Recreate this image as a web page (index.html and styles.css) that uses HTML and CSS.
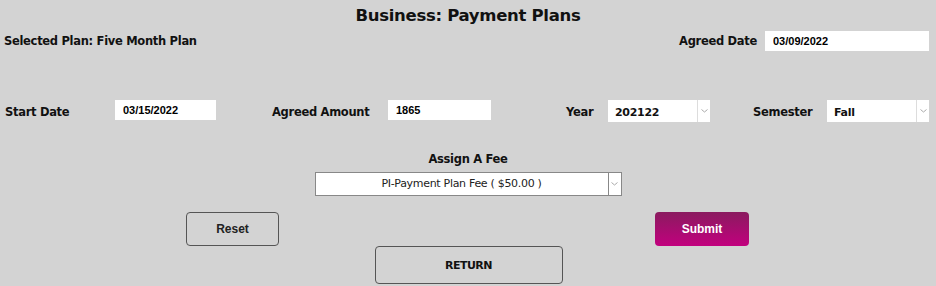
FILE: index.html
```html
<!DOCTYPE html>
<html lang="en">

<head>
  <meta charset="UTF-8">
  <meta name="viewport" content="width=device-width, initial-scale=1.0">
  <title>Business: Payment Plans</title>
  <link rel="stylesheet" href="styles.css">
</head>

<body>
  <div class="page">
    <h1 class="title">Business: Payment Plans</h1>

    <div class="row-top">
      <span class="label">Selected Plan: Five Month Plan</span>
      <div class="field">
        <span class="label">Agreed Date</span>
        <input class="box box-date" type="text" value="03/09/2022">
      </div>
    </div>

    <div class="row-fields">
      <span class="label lbl-start">Start Date</span>
      <input class="box box-small" type="text" value="03/15/2022">
      <span class="label lbl-amount">Agreed Amount</span>
      <input class="box box-small amount" type="text" value="1865">
      <span class="label lbl-year">Year</span>
      <div class="drop">
        <span class="drop-text">202122</span>
        <span class="drop-arrow"><svg width="7" height="4" viewBox="0 0 7 4"><path d="M0.5 0.5 L3.5 3 L6.5 0.5" fill="none" stroke="#aaa" stroke-width="1"/></svg></span>
      </div>
      <span class="label lbl-sem">Semester</span>
      <div class="drop">
        <span class="drop-text">Fall</span>
        <span class="drop-arrow"><svg width="7" height="4" viewBox="0 0 7 4"><path d="M0.5 0.5 L3.5 3 L6.5 0.5" fill="none" stroke="#aaa" stroke-width="1"/></svg></span>
      </div>
    </div>

    <div class="fee">
      <span class="label">Assign A Fee</span>
      <div class="drop drop-fee">
        <span class="drop-text">PI-Payment Plan Fee ( $50.00 )</span>
        <span class="drop-arrow"><svg width="7" height="4" viewBox="0 0 7 4"><path d="M0.5 0.5 L3.5 3 L6.5 0.5" fill="none" stroke="#aaa" stroke-width="1"/></svg></span>
      </div>
    </div>

    <div class="actions">
      <button class="btn btn-reset">Reset</button>
      <button class="btn btn-submit">Submit</button>
    </div>
    <div class="actions-return">
      <button class="btn btn-return">RETURN</button>
    </div>
  </div>
</body>

</html>
```

FILE: styles.css
```css
body {
  margin: 0;
  background: #d3d3d3;
  font-family: "DejaVu Sans", "Liberation Sans", sans-serif;
  color: #111;
}

.page {
  width: 936px;
  height: 286px;
}

.title {
  margin: 0;
  height: 31px;
  line-height: 32px;
  text-align: center;
  font-size: 16.5px;
  font-weight: bold;
  letter-spacing: -0.3px;
}

.label {
  font-size: 11.5px;
  font-weight: bold;
  letter-spacing: -0.3px;
}

.row-top {
  display: flex;
  justify-content: space-between;
  align-items: center;
  height: 20px;
  padding: 0 7px 0 4px;
}

.field {
  display: flex;
  align-items: center;
  gap: 8px;
}

.box {
  box-sizing: border-box;
  height: 20px;
  padding: 0 8px;
  border: none;
  outline: none;
  background: #fff;
  font-family: "Liberation Sans", Arial, sans-serif;
  font-size: 11px;
  font-weight: bold;
  color: #000;
}

.box-date {
  width: 164px;
}

.box-small {
  width: 101px;
}

.amount {
  width: 103px;
}

.row-fields {
  display: flex;
  align-items: center;
  height: 22px;
  margin-top: 49px;
}

.row-fields .box {
  margin-top: -2px;
}

.row-fields .label {
  padding-top: 1px;
}

.lbl-start {
  width: 110px;
  padding-left: 5px;
}

.lbl-amount {
  width: 116px;
  margin-left: 56px;
}

.lbl-year {
  width: 42px;
  margin-left: 75px;
}

.lbl-sem {
  width: 74px;
  margin-left: 43px;
}

.drop {
  box-sizing: border-box;
  display: flex;
  width: 102px;
  height: 22px;
  background: #fff;
}

.drop-text {
  flex: 1;
  padding-left: 7px;
  padding-top: 4px;
  font-size: 11px;
  font-weight: bold;
  letter-spacing: -0.3px;
  line-height: 18px;
}

.drop-arrow {
  display: flex;
  align-items: center;
  justify-content: center;
  width: 12px;
  border-left: 1px solid #ddd;
}

.fee {
  display: flex;
  flex-direction: column;
  align-items: center;
  margin-top: 30px;
}

.drop-fee {
  width: 307px;
  height: 24px;
  margin-top: 6px;
  border: 1px solid #888;
}

.drop-fee .drop-text {
  padding-left: 0;
  padding-top: 2px;
  text-align: center;
  font-weight: normal;
  color: #222;
}

.drop-fee .drop-arrow {
  border-left: 1px solid #888;
}

.actions {
  display: flex;
  margin-top: 16px;
  padding-left: 186px;
}

.btn {
  box-sizing: border-box;
  border: 1px solid #555;
  border-radius: 4px;
  background: #d3d3d3;
  font-family: "Liberation Sans", Arial, sans-serif;
  font-size: 12px;
  font-weight: bold;
  color: #222;
  cursor: pointer;
}

.btn-reset {
  width: 93px;
  height: 34px;
}

.btn-submit {
  width: 94px;
  height: 34px;
  margin-left: 376px;
  border: none;
  color: #fff;
  background: linear-gradient(#8a1b5f, #c2007e);
}

.actions-return {
  display: flex;
  justify-content: center;
}

.btn-return {
  width: 188px;
  height: 38px;
  margin-left: 1px;
  font-family: "DejaVu Sans", sans-serif;
  font-size: 11px;
  letter-spacing: -0.5px;
  color: #111;
}
```
